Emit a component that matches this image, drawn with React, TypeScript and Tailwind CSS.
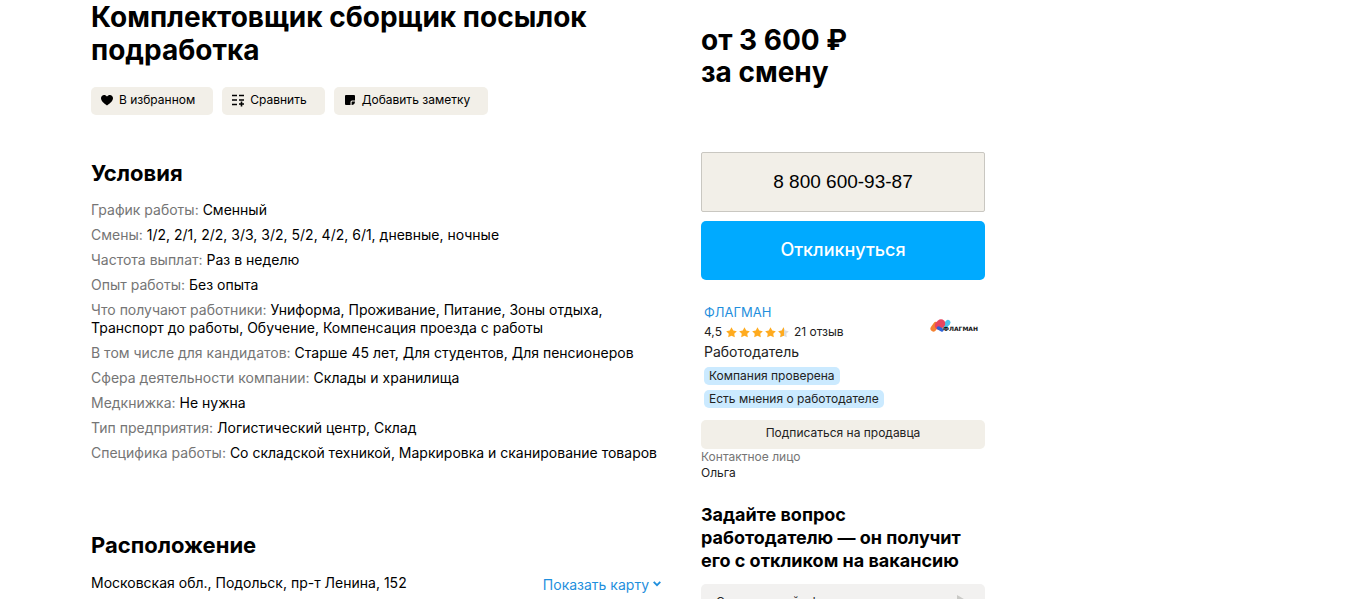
import React from "react";

const conditions: [string, string][] = [
  ["График работы", "Сменный"],
  ["Смены", "1/2, 2/1, 2/2, 3/3, 3/2, 5/2, 4/2, 6/1, дневные, ночные"],
  ["Частота выплат", "Раз в неделю"],
  ["Опыт работы", "Без опыта"],
  ["Что получают работники", "Униформа, Проживание, Питание, Зоны отдыха, Транспорт до работы, Обучение, Компенсация проезда с работы"],
  ["В том числе для кандидатов", "Старше 45 лет, Для студентов, Для пенсионеров"],
  ["Сфера деятельности компании", "Склады и хранилища"],
  ["Медкнижка", "Не нужна"],
  ["Тип предприятия", "Логистический центр, Склад"],
  ["Специфика работы", "Со складской техникой, Маркировка и сканирование товаров"],
];

const STAR = "M6 0.3 7.900 3.900 11.800 4.500 9 7.300 9.600 11.300 6 9.500 2.400 11.300 3 7.300 0.200 4.500 4.100 3.900Z";

function Star({ half = false }: { half?: boolean }) {
  return (
    <svg viewBox="0 0 12 12" className="size-[11px]" aria-hidden="true">
      <path d={STAR} fill={half ? "#dcdcdc" : "#ffab1f"} />
      {half && (
        <>
          <clipPath id="half-star">
            <rect width="6.5" height="12" />
          </clipPath>
          <path d={STAR} fill="#ffab1f" clipPath="url(#half-star)" />
        </>
      )}
    </svg>
  );
}

function HeartIcon() {
  return (
    <svg viewBox="0 0 14 14" className="size-[14px]" aria-hidden="true">
      <path d="M7 12.500C3.600 10 1 8.200 1 5.100 1 3.200 2.400 1.900 4.100 1.900c1.200 0 2.200.6 2.900 1.500.7-.9 1.700-1.500 2.900-1.500C11.600 1.900 13 3.200 13 5.100 13 8.200 10.400 10 7 12.500Z" />
    </svg>
  );
}

function CompareIcon() {
  return (
    <svg viewBox="0 0 14 14" className="size-[14px]" stroke="currentColor" strokeWidth="1.6" aria-hidden="true">
      <path d="M1 2.500H6M8 2.500H13M1 7H6M8 7H13M1 11.500H6M8 11H13M10.500 8.500V13.500" />
    </svg>
  );
}

function NoteIcon() {
  return (
    <svg viewBox="0 0 14 14" className="size-[14px]" aria-hidden="true">
      <path d="M2 3Q2 2 3 2H11Q12 2 12 3V7.500H9Q7.500 7.500 7.500 9V12H3Q2 12 2 11Z" />
      <path d="M8.600 9.200Q8.600 8.600 9.200 8.600H12Q12 12 8.600 12Z" />
    </svg>
  );
}

function FlagmanLogo() {
  return (
    <svg viewBox="0 0 50 16" className="h-4 w-[50px]" role="img" aria-label="Флагман">
      <g strokeLinecap="round">
        <path d="M15 8 18 4.500" stroke="#4cc3ea" strokeWidth="5" />
        <path d="M3.500 10.500 6 7" stroke="#f58232" strokeWidth="6" />
        <path d="M9 7.500 11 5.500" stroke="#e8455e" strokeWidth="8.500" />
        <path d="M8.500 10 12 12" stroke="#2d62d8" strokeWidth="3.500" />
      </g>
      <text x="13" y="13" className="font-['DejaVu_Sans'] text-[6px] font-bold" fill="#111">ФЛАГМАН</text>
    </svg>
  );
}

function ActionButton({ icon, children }: { icon: React.ReactNode; children: React.ReactNode }) {
  return (
    <button type="button" className="flex h-7 items-center gap-[5px] rounded-[5px] bg-[#f2efe8] pr-[18px] pb-0.5 pl-[9px] text-[12px] leading-4">
      {icon}
      {children}
    </button>
  );
}

export default function App() {
  return (
    <div className="flex h-screen items-start gap-10 overflow-hidden bg-white pl-[91px] font-['Inter',sans-serif] text-black">
      <main className="w-[570px] shrink-0 pt-px">
        <h1 className="text-[28px] leading-[33px] font-bold">Комплектовщик сборщик посылок подработка</h1>
        <div className="mt-5 flex gap-[9px]">
          <ActionButton icon={<HeartIcon />}>В избранном</ActionButton>
          <ActionButton icon={<CompareIcon />}>Сравнить</ActionButton>
          <ActionButton icon={<NoteIcon />}>Добавить заметку</ActionButton>
        </div>

        <section className="mt-11">
          <h2 className="text-[22px] leading-7 font-bold">Условия</h2>
          <ul className="mt-[14px] flex flex-col gap-[7px] text-[14px] leading-[18px]">
            {conditions.map(([label, value]) => (
              <li key={label}>
                <span className="text-[#757575]">{label}: </span>
                {value}
              </li>
            ))}
          </ul>
        </section>

        <section className="mt-[69px]">
          <h2 className="text-[22px] leading-7 font-bold">Расположение</h2>
          <div className="mt-[14px] flex items-start justify-between text-[14px] leading-5">
            <span>Московская обл., Подольск, пр-т Ленина, 152</span>
            <a href="#map" className="flex items-center gap-1 pt-0.5 text-[#1f8fdd]">
              Показать карту
              <svg viewBox="0 0 8 8" className="size-2" fill="none" stroke="currentColor" strokeWidth="1.8" aria-hidden="true">
                <path d="M0.700 0.800 4 4.200 7.300 0.800" />
              </svg>
            </a>
          </div>
        </section>
      </main>

      <aside className="w-[284px] shrink-0 pt-6">
        <p className="text-[28px] leading-8 font-bold">
          от 3 600 ₽<br />
          за смену
        </p>
        <div className="mt-16 flex flex-col gap-[9px]">
          <button type="button" className="h-[60px] rounded-xs border border-[#c9c7c1] bg-[#f2efe8] font-['Liberation_Sans',sans-serif] text-[19px]">
            8 800 600-93-87
          </button>
          <button type="button" className="h-[59px] rounded-[5px] bg-[#00aaff] pb-0.5 text-[18px] font-medium text-white">
            Откликнуться
          </button>
        </div>

        <section className="mt-[22px] flex justify-between pr-[5px] pl-[3px]">
          <div className="flex flex-col items-start text-[#222]">
            <a href="#company" className="text-[13px] leading-5 text-[#1f8fdd]">ФЛАГМАН</a>
            <div className="flex items-center text-[12px] leading-5">
              4,5
              <span className="mr-[5px] ml-1 flex gap-[2px]">
                <Star />
                <Star />
                <Star />
                <Star />
                <Star half />
              </span>
              21 отзыв
            </div>
            <div className="text-[14px] leading-5">Работодатель</div>
            <span className="mt-[5px] rounded-[5px] bg-[#cbeaff] px-[5px] text-[12px] leading-[18px]">Компания проверена</span>
            <span className="mt-[5px] rounded-[5px] bg-[#cbeaff] px-[5px] text-[12px] leading-[18px]">Есть мнения о работодателе</span>
          </div>
          <div className="pt-4">
            <FlagmanLogo />
          </div>
        </section>

        <button type="button" className="mt-3 block h-[29px] w-full rounded-[5px] bg-[#f2efe8] pb-1 text-[12px] text-[#222]">
          Подписаться на продавца
        </button>
        <dl className="text-[12px] leading-4">
          <dt className="text-[#757575]">Контактное лицо</dt>
          <dd className="text-[#222]">Ольга</dd>
        </dl>

        <h2 className="mt-[22px] pr-2 text-[18px] leading-[23px] font-bold">
          Задайте вопрос
          <br />
          работодателю — он получит его с откликом на вакансию
        </h2>
        <form className="mt-3 flex h-11 items-start rounded-[5px] bg-[#f2f1f0] px-[15px] pt-2" onSubmit={(e) => e.preventDefault()}>
          <input aria-label="Вопрос работодателю" defaultValue="Современный офис" className="min-w-0 flex-1 bg-transparent text-[12px] leading-5 text-[#222] outline-none" />
          <button type="submit" aria-label="Отправить" className="pt-0.5">
            <svg viewBox="0 0 14 16" className="h-4 w-[14px]" fill="#c9c9c6" aria-hidden="true">
              <path d="M1 1 13 8 1 15 1 10 7 8 1 6Z" />
            </svg>
          </button>
        </form>
      </aside>
    </div>
  );
}
